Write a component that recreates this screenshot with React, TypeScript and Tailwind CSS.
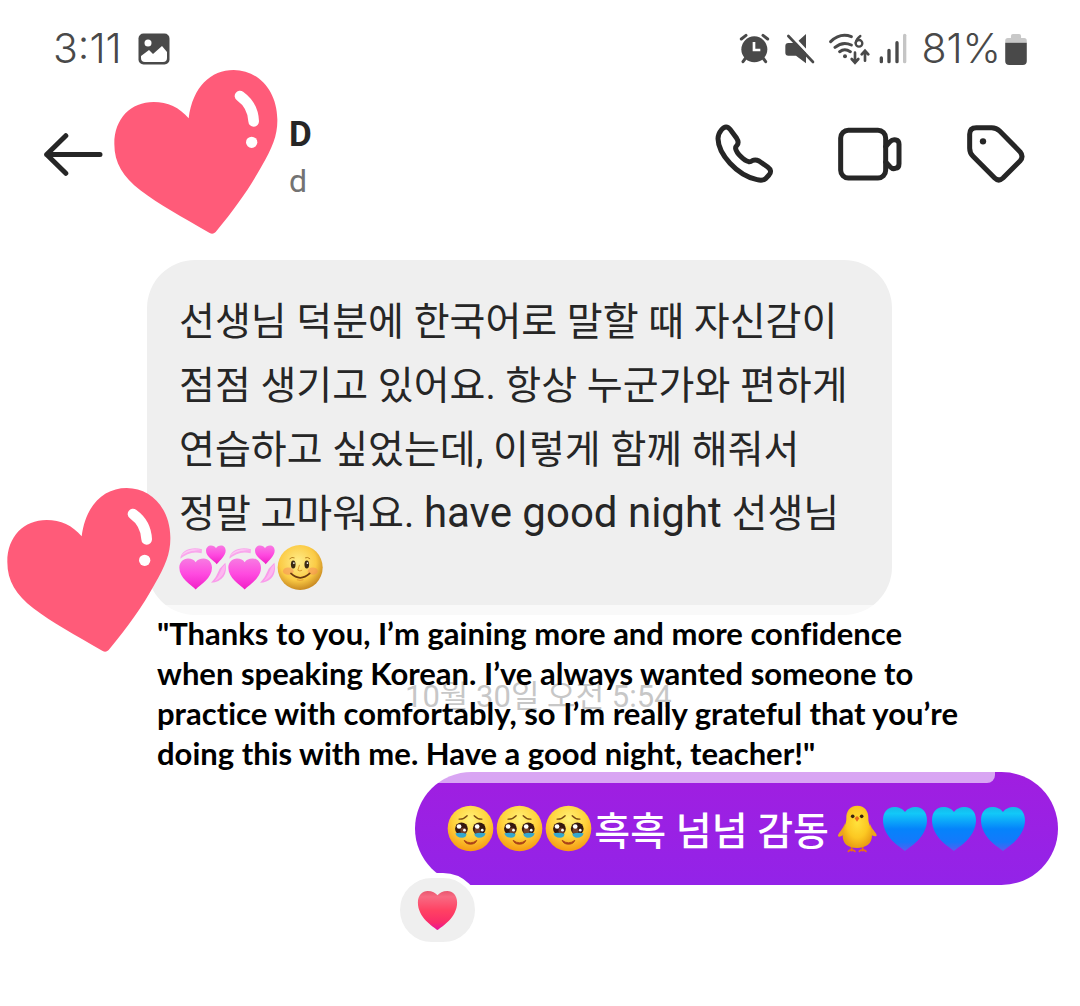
import React from "react";

function Gradients() {
  return (
    <svg className="absolute size-0" aria-hidden="true">
      <defs>
        <radialGradient id="face" cx="50%" cy="30%" r="70%">
          <stop offset="0" stopColor="#fff176" />
          <stop offset="0.55" stopColor="#ffd23c" />
          <stop offset="1" stopColor="#f59a12" />
        </radialGradient>
        <radialGradient id="moon" cx="45%" cy="38%" r="62%">
          <stop offset="0" stopColor="#ffee8c" />
          <stop offset="0.65" stopColor="#fbcb45" />
          <stop offset="1" stopColor="#c98a22" />
        </radialGradient>
        <linearGradient id="blue" x1="0" y1="0" x2="0" y2="1">
          <stop offset="0" stopColor="#16b8e8" />
          <stop offset="0.15" stopColor="#12c8f8" />
          <stop offset="0.5" stopColor="#0583fb" />
          <stop offset="0.8" stopColor="#1479fb" />
          <stop offset="1" stopColor="#5a5cf0" />
        </linearGradient>
        <linearGradient id="pink" x1="0" y1="0" x2="0" y2="1">
          <stop offset="0" stopColor="#f77be2" />
          <stop offset="0.5" stopColor="#ff4ae0" />
          <stop offset="1" stopColor="#f01fc6" />
        </linearGradient>
        <linearGradient id="red" x1="0" y1="0" x2="0" y2="1">
          <stop offset="0" stopColor="#e8566e" />
          <stop offset="0.15" stopColor="#f86a82" />
          <stop offset="0.5" stopColor="#ff4163" />
          <stop offset="0.8" stopColor="#fa2c69" />
          <stop offset="1" stopColor="#e8129c" />
        </linearGradient>
        <radialGradient id="chick" cx="50%" cy="40%" r="60%">
          <stop offset="0" stopColor="#ffe23c" />
          <stop offset="0.6" stopColor="#fcc822" />
          <stop offset="1" stopColor="#e99e14" />
        </radialGradient>
      </defs>
    </svg>
  );
}

const HEART =
  "M23 45 C18 41 1 31 1 14 C1 6 6 1 12 1 C17 1 21 3 23 6 C25 3 29 1 34 1 C40 1 45 6 45 14 C45 31 28 41 23 45Z";

function EmojiHeart({ fill, className, label }: { fill: string; className: string; label: string }) {
  return (
    <svg viewBox="0 0 46 46" className={className} role="img" aria-label={label}>
      <path d={HEART} fill={fill} />
    </svg>
  );
}

function RevolvingHearts() {
  return (
    <svg viewBox="118 190 147 140" className="h-[47px] w-[49px]" role="img" aria-label="revolving hearts">
      <path d="M122 234 C124 208 154 197 187 205 L186 217 C160 211 140 218 122 234Z" fill="#f9a6ec" />
      <path d="M124 226 C136 206 160 201 187 208 C160 207 140 213 124 226Z" fill="#fcc6f3" />
      <path d="M257 246 C265 280 248 304 214 306 C230 290 232 280 240 264Z" fill="#f99bea" />
      <path d="M257 250 C259 274 246 292 224 301 C240 286 240 274 248 260Z" fill="#fdb6f0" />
      <path
        d="M168 326 C154 312 119 292 119 261 C119 244 131 233 145 233 C156 233 163 237 168 244 C173 237 181 233 192 233 C206 233 217 244 217 261 C217 292 182 312 168 326Z"
        fill="url(#pink)"
      />
      <path
        d="M231 250 C224 240 199 228 199 210 C199 200 206 194 214 194 C221 194 226 197 229 202 C232 197 237 194 244 194 C252 194 258 200 258 209 C258 225 242 238 231 250Z"
        fill="url(#pink)"
      />
    </svg>
  );
}

function MoonFace() {
  return (
    <svg viewBox="412 190 142 140" className="h-[47px] w-[47px]" role="img" aria-label="full moon face">
      <circle cx="482" cy="260" r="68" fill="url(#moon)" />
      <ellipse cx="446" cy="271" rx="16" ry="11" fill="#f58a5a" opacity=".5" />
      <ellipse cx="520" cy="271" rx="15" ry="11" fill="#f58a5a" opacity=".5" />
      <ellipse cx="461" cy="251" rx="7" ry="12" fill="#3b2a14" />
      <ellipse cx="502" cy="251" rx="7" ry="12" fill="#3b2a14" />
      <circle cx="463" cy="247" r="2.500" fill="#fff" />
      <circle cx="504" cy="247" r="2.500" fill="#fff" />
      <path d="M450 234q7-7 15-3M497 231q8-4 15 3" stroke="#b6801f" strokeWidth="3" fill="none" />
      <path d="M480 252l-5 16q6 5 13 0" stroke="#dc9b2c" strokeWidth="3" fill="none" />
      <path d="M454 278q28 26 57 0" stroke="#6b3a10" strokeWidth="5" fill="none" strokeLinecap="round" />
      <path d="M472 297q10 4 20 0" stroke="#e39a35" strokeWidth="3" fill="none" />
    </svg>
  );
}

function TearyFace() {
  return (
    <svg viewBox="145 149 140 140" className="size-[47px]" role="img" aria-label="face holding back tears">
      <circle cx="215" cy="219" r="68" fill="url(#face)" />
      <path d="M181 191q14 1 24-10M226 181q10 11 23 10" stroke="#7b4a12" strokeWidth="4" fill="none" strokeLinecap="round" />
      <circle cx="188" cy="220" r="19" fill="#35180f" />
      <circle cx="241" cy="220" r="19" fill="#35180f" />
      <circle cx="194" cy="226" r="9" fill="#74402a" />
      <circle cx="236" cy="226" r="9" fill="#74402a" />
      <circle cx="181" cy="213" r="7" fill="#fff" />
      <circle cx="235" cy="213" r="7" fill="#fff" />
      <circle cx="197" cy="224" r="4" fill="#fff" />
      <circle cx="250" cy="224" r="4" fill="#fff" />
      <path d="M170 233q18-3 33 2q0 9-8 11q-22 2-25-13Z" fill="#36a7cf" />
      <path d="M226 235q16-5 34-2q-3 15-25 13q-8-2-9-11Z" fill="#36a7cf" />
      <path d="M196 254q19 15 38 0q-4 12-19 12t-19-12Z" fill="#b2431b" stroke="#9c3715" strokeWidth="2" strokeLinejoin="round" />
    </svg>
  );
}

function Chick() {
  return (
    <svg viewBox="276 147 147 144" className="h-[48px] w-[49px]" role="img" aria-label="baby chick">
      <path d="M332 270v14m-10 2q5-5 10-3q5-2 10 3M365 270v14m-10 2q5-5 10-3q5-2 10 3" stroke="#e96b1c" strokeWidth="5" fill="none" strokeLinecap="round" />
      <path d="M312 202C305 222 290 232 291 241Q298 245 310 234ZM386 202C393 222 408 232 407 239Q400 244 388 234Z" fill="#eda51c" />
      <path d="M349 149C326 149 315 167 316 186C317 204 305 217 305 238C305 263 320 276 348 276C376 276 393 263 393 238C393 217 381 204 382 186C383 167 372 149 349 149Z" fill="url(#chick)" />
      <circle cx="335" cy="181" r="5.500" fill="#3a2210" />
      <circle cx="362" cy="181" r="5.500" fill="#3a2210" />
      <path d="M341 187L348 180L355 187L348 197Z" fill="#e96a1c" />
    </svg>
  );
}

function HeartSticker({ className }: { className: string }) {
  return (
    <svg viewBox="0 0 490 492" className={className} role="img" aria-label="heart sticker">
      <path
        d="M223 145 C195 112 160 96 118 96 C50 96 0 145 0 222 C0 280 26 320 78 361 C135 404 200 440 286 489 Q296 494 304 486 C365 412 405 355 441 290 C475 232 490 195 489 148 C488 60 430 0 358 0 C290 0 235 50 223 145Z"
        fill="#ff5b79"
      />
      <path d="M377 78 Q416 106 418 154" fill="none" stroke="#fff" strokeWidth="32" strokeLinecap="round" />
      <circle cx="412" cy="217" r="17" fill="#fff" />
    </svg>
  );
}

function StatusIcons() {
  return (
    <svg viewBox="60 36 510 102" className="h-[34px] w-[170px]" role="img" aria-label="Alarm, muted, Wi-Fi, signal">
      <g stroke="#494949" fill="none" strokeLinecap="round">
        <circle cx="106" cy="88" r="39" fill="#494949" stroke="none" />
        <path d="M67 57L81 46M132 46L146 57" strokeWidth="9" />
        <path d="M80 114L72 125M132 114L140 125" strokeWidth="9" />
        <path d="M105 66V90H124" stroke="#fff" strokeWidth="8" strokeLinecap="butt" />
        <path d="M261 42V130L231 107H208Q199 107 199 98V78Q199 69 208 69H231Z" fill="#494949" stroke="none" />
        <path d="M214 43L288 121" stroke="#fff" strokeWidth="9" />
        <path d="M208 48L282 126" strokeWidth="8" />
        <path d="M335 65Q364 37 397 50M348 82Q371 63 397 75M362 95Q377 84 394 95" strokeWidth="9" />
        <circle cx="378" cy="109" r="6" fill="#494949" stroke="none" />
        <circle cx="420" cy="70" r="10" strokeWidth="7" />
        <path d="M410 68Q412 57 424 48" strokeWidth="7" />
        <path d="M408 98V127M398 117L408 128L418 117M438 122V94M428 103L438 92L448 103" strokeWidth="8" />
        <path d="M487 114V125M510 91V125M534 68V125" strokeWidth="10" />
        <path d="M557 46V125" stroke="#c5c5c5" strokeWidth="10" />
      </g>
    </svg>
  );
}

const iconProps = {
  fill: "none",
  stroke: "#262626",
  strokeWidth: 15,
  strokeLinecap: "round" as const,
  strokeLinejoin: "round" as const,
};

export default function App() {
  return (
    <main className="min-h-screen overflow-hidden bg-white font-['Roboto','Noto_Sans_CJK_KR',sans-serif] text-[#262626]">
      <Gradients />
      <div className="flex h-[98px] items-center justify-between pr-[53px] pl-[53px] font-['Inter',sans-serif] text-[41px] font-light text-[#494949]">
        <div className="flex items-center gap-4">
          <span>3:11</span>
          <svg viewBox="0 0 32 32" className="size-8" role="img" aria-label="Picture">
            <rect x="0.500" y="0.500" width="31" height="31" rx="5" fill="#494949" />
            <circle cx="10" cy="10" r="3.500" fill="#fff" />
            <path d="M3 23L11 17L15 21L24 13L29 19V25Q29 29 25 29H7Q3 29 3 25Z" fill="#fff" />
          </svg>
        </div>
        <div className="flex items-center">
          <StatusIcons />
          <span className="ml-3">81%</span>
          <svg viewBox="855 40 64 92" className="ml-1 h-[31px] w-[22px]" role="img" aria-label="Battery">
            <path d="M855 66V60Q855 52 863 52H872V46Q872 40 878 40H896Q902 40 902 46V52H911Q919 52 919 60V66Z" fill="#c8c8c8" />
            <path d="M855 66H919V120Q919 132 907 132H867Q855 132 855 120Z" fill="#494949" />
          </svg>
        </div>
      </div>

      <header className="relative flex h-[112px] items-center justify-between pr-[54px] pl-[44px]">
        <div className="flex items-center">
          <button type="button" aria-label="Back">
            <svg viewBox="43 336 176 128" className="h-[43px] w-[59px]" {...iconProps}>
              <path d="M51 400H210M108 344L51 400L108 456" />
            </svg>
          </button>
          <HeartSticker className="absolute -top-7 left-[114px] size-[164px]" />
          <div className="ml-[186px] flex flex-col pt-2">
            <h1 className="text-[35px] leading-[46px] font-bold">D</h1>
            <p className="text-[32px] leading-[46px] text-[#737373]">d</p>
          </div>
        </div>
        <div className="flex items-center gap-16">
          <button type="button" aria-label="Call">
            <svg viewBox="45 40 177 180" className="h-[60px] w-[59px]" {...iconProps}>
              <path d="M64 58Q79 40 91 57L110 83Q118 95 111 104Q106 109 107 114C110 128 132 150 146 153Q152 154 157 150Q166 145 177 151L203 169Q218 180 207 193L197 204Q189 211 171 207C110 194 55 130 54 84Q54 70 64 58Z" />
            </svg>
          </button>
          <button type="button" aria-label="Video call">
            <svg viewBox="416 40 192 180" className="h-[60px] w-[64px]" {...iconProps}>
              <rect x="424" y="59" width="135" height="143" rx="23" />
              <path d="M559 108L572 93Q580 85 590 88Q599 90 599 101V159Q599 172 588 173Q580 176 572 168L559 154" />
            </svg>
          </button>
          <button type="button" aria-label="Label">
            <svg viewBox="800 40 180 180" className="size-[60px]" {...iconProps}>
              <path d="M831 51H877Q891 51 901 61L962 123Q974 138 962 151L911 202Q898 214 886 202L821 137Q811 127 811 113V71Q811 51 831 51Z" />
              <circle cx="851" cy="92" r="9.500" fill="#262626" stroke="none" />
            </svg>
          </button>
        </div>
      </header>

      <section className="flex flex-col pt-[50px] pr-[22px] pl-[147px]">
        <div className="relative self-start rounded-[48px] bg-[#efefef] pt-[30px] pr-10 pb-6 pl-8 text-[39px] leading-[64px]">
          <p className="h-[254px] pr-1">
            선생님 덕분에 한국어로 말할 때 자신감이
            <br />
            점점 생기고 있어요. 항상 누군가와 편하게
            <br />
            연습하고 싶었는데, 이렇게 함께 해줘서
            <br />
            정말 고마워요. <span className="text-[42px] leading-[60px]">have good night</span> 선생님
          </p>
          <div className="flex">
            <RevolvingHearts />
            <RevolvingHearts />
            <MoonFace />
          </div>
          <HeartSticker className="absolute top-[228px] -left-[140px] size-[164px]" />
        </div>

        <div className="relative h-[157px]">
          <time className="absolute top-[58px] left-[258px] text-[31px] leading-[48px] whitespace-nowrap text-[#737373]">
            10월 30일 오전 5:54
          </time>
          <p className="absolute -top-[10px] left-0 z-10 h-[178px] w-[848px] rounded-lg bg-white/60 pt-2 pl-[10px] font-['Lato',sans-serif] text-[31px] leading-[40px] font-bold whitespace-nowrap text-black [font-variant-ligatures:none]">
            "Thanks to you, I’m gaining more and more confidence
            <br />
            when speaking Korean. I’ve always wanted someone to
            <br />
            practice with comfortably, so I’m really grateful that you’re
            <br />
            doing this with me. Have a good night, teacher!"
          </p>
        </div>

        <div className="relative flex h-[113px] items-center self-end rounded-[57px] bg-linear-to-b from-[#a01ee0] to-[#9323e8] px-8 text-[39px] text-white">
          <span className="flex gap-[2px]">
            <TearyFace />
            <TearyFace />
            <TearyFace />
          </span>
          <span className="mr-1 ml-[2px] pt-2 font-medium whitespace-nowrap">흑흑 넘넘 감동</span>
          <Chick />
          <span className="flex gap-[3px]">
            <EmojiHeart fill="url(#blue)" className="size-[46px]" label="blue heart" />
            <EmojiHeart fill="url(#blue)" className="size-[46px]" label="blue heart" />
            <EmojiHeart fill="url(#blue)" className="size-[46px]" label="blue heart" />
          </span>
          <button
            type="button"
            aria-label="Heart reaction"
            className="absolute top-[101px] -left-5 flex h-[74px] w-[85px] items-center justify-center rounded-[37px] border-5 border-white bg-[#efefef]"
          >
            <EmojiHeart fill="url(#red)" className="size-[41px]" label="red heart" />
          </button>
        </div>
      </section>
    </main>
  );
}
